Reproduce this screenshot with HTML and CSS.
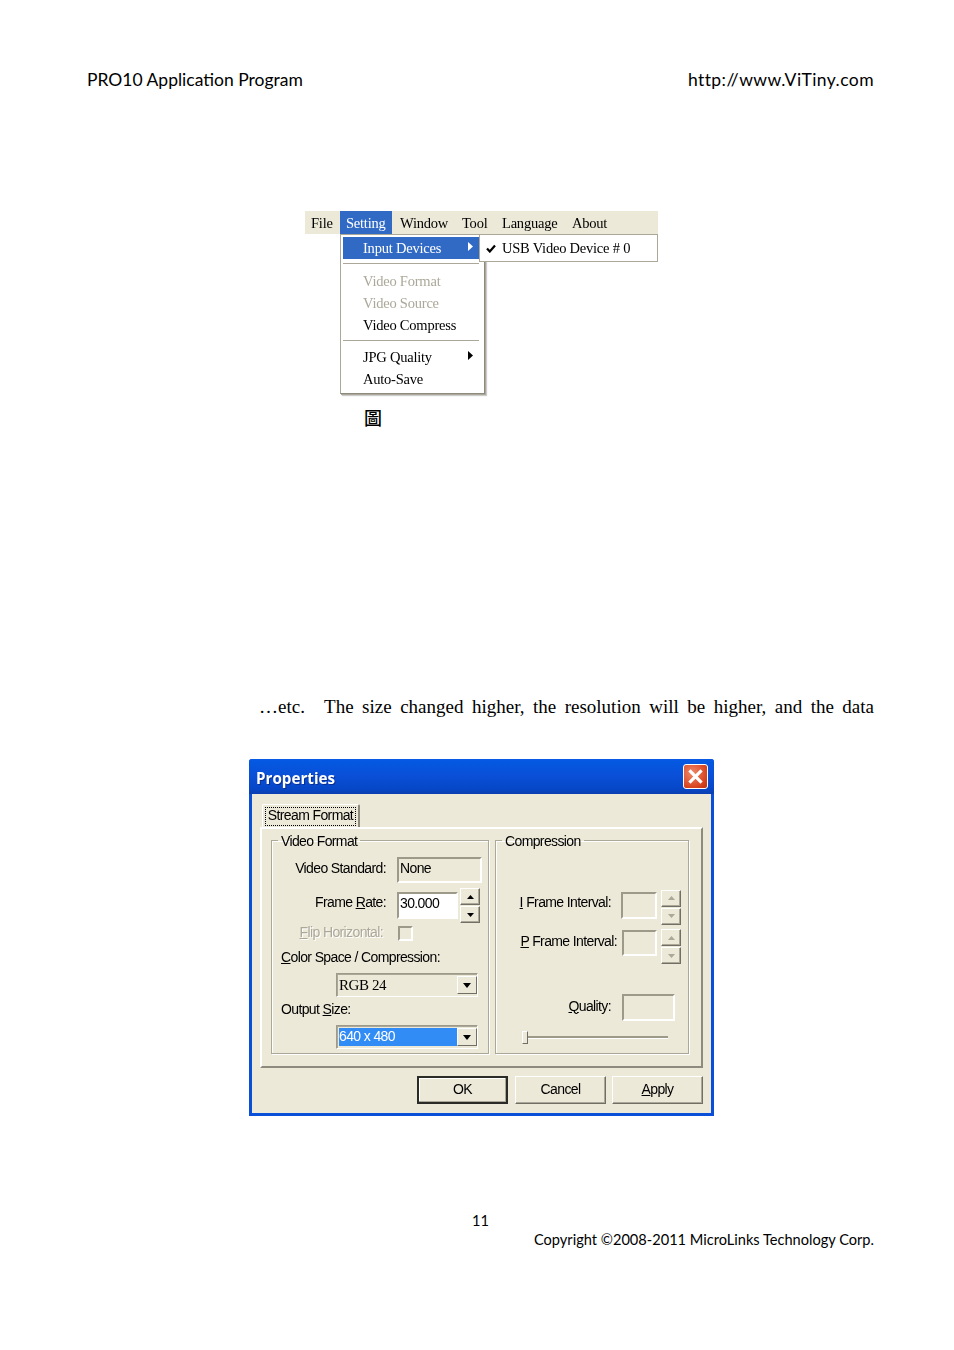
FILE: index.html
```html
<!DOCTYPE html>
<html lang="en">
<head>
<meta charset="utf-8">
<title>PRO10 Application Program</title>
<link rel="stylesheet" href="styles.css">
</head>
<body>
<main class="page">
  <header class="doc-head"><span>PRO10 Application Program</span><span class="doc-url">http://www.ViTiny.com</span></header>

  <section class="menu-shot">
    <nav class="menubar">
      <span class="mb-item mb-file">File</span>
      <span class="mb-item mb-active">Setting</span>
      <span class="mb-item mb-window">Window</span>
      <span class="mb-item mb-tool">Tool</span>
      <span class="mb-item mb-lang">Language</span>
      <span class="mb-item mb-about">About</span>
    </nav>
    <div class="dropdown">
      <div class="dd-row dd-selected">Input Devices<svg class="dd-arrow" viewBox="0 0 5 9"><path d="M0 0L5 4.5L0 9Z" fill="#fff"/></svg></div>
      <div class="dd-sep dd-sep-a"></div>
      <div class="dd-row dd-off">Video Format</div>
      <div class="dd-row dd-off">Video Source</div>
      <div class="dd-row">Video Compress</div>
      <div class="dd-sep dd-sep-b"></div>
      <div class="dd-row">JPG Quality<svg class="dd-arrow" viewBox="0 0 5 9"><path d="M0 0L5 4.5L0 9Z" fill="#000"/></svg></div>
      <div class="dd-row">Auto-Save</div>
    </div>
    <div class="submenu">
      <svg class="check" viewBox="0 0 10 9"><path d="M1 4.5L3.8 7.5L9 1.5" fill="none" stroke="#000" stroke-width="2.2"/></svg>
      <span>USB Video Device # 0</span>
    </div>
  </section>
  <p class="caption-glyph">圖</p>

  <p class="body-line"><span class="lead-gap">…etc.&nbsp;&nbsp;</span> The size changed higher, the resolution will be higher, and the data</p>

  <section class="dialog">
    <div class="titlebar">
      <span class="title">Properties</span>
      <span class="close"><svg viewBox="0 0 14 14"><path d="M2 2L12 12M12 2L2 12" stroke="#fff" stroke-width="2.6" fill="none"/></svg></span>
    </div>
    <div class="client">
      <div class="tab"><span class="tab-focus">Stream Format</span></div>
      <div class="panel">
        <fieldset class="group group-video">
          <legend>Video Format</legend>
          <div class="row r-standard">
            <span class="lbl lbl-a lbl-std">Video Standard:</span>
            <span class="box box-none">None</span>
          </div>
          <div class="row r-rate">
            <span class="lbl lbl-a lbl-rate">Frame <u>R</u>ate:</span>
            <span class="box box-white">30.000</span>
            <span class="spin">
              <span class="spin-btn"><svg viewBox="0 0 7 4"><path d="M3.5 0L7 4H0Z" fill="#000"/></svg></span>
              <span class="spin-btn"><svg viewBox="0 0 7 4"><path d="M0 0H7L3.5 4Z" fill="#000"/></svg></span>
            </span>
          </div>
          <div class="row r-flip">
            <span class="lbl lbl-flip disabled"><u>F</u>lip Horizontal:</span>
            <span class="checkbox"></span>
          </div>
          <div class="free-label fl-color"><u>C</u>olor Space / Compression:</div>
          <div class="combo combo-color"><span class="combo-val serif">RGB 24</span><span class="combo-btn"><svg viewBox="0 0 8 5"><path d="M0 0H8L4 5Z" fill="#000"/></svg></span></div>
          <div class="free-label fl-size">Output <u>S</u>ize:</div>
          <div class="combo combo-size"><span class="combo-val picked">640 x 480</span><span class="combo-btn"><svg viewBox="0 0 8 5"><path d="M0 0H8L4 5Z" fill="#000"/></svg></span></div>
        </fieldset>
        <fieldset class="group group-comp">
          <legend>Compression</legend>
          <div class="row r-i">
            <span class="lbl lbl-i"><u>I</u> Frame Interval:</span>
            <span class="box box-i"></span>
            <span class="spin spin-off">
              <span class="spin-btn"><svg viewBox="0 0 7 4"><path d="M3.5 0L7 4H0Z" fill="#aca899"/></svg></span>
              <span class="spin-btn"><svg viewBox="0 0 7 4"><path d="M0 0H7L3.5 4Z" fill="#aca899"/></svg></span>
            </span>
          </div>
          <div class="row r-p">
            <span class="lbl lbl-p"><u>P</u> Frame Interval:</span>
            <span class="box box-p"></span>
            <span class="spin spin-off">
              <span class="spin-btn"><svg viewBox="0 0 7 4"><path d="M3.5 0L7 4H0Z" fill="#aca899"/></svg></span>
              <span class="spin-btn"><svg viewBox="0 0 7 4"><path d="M0 0H7L3.5 4Z" fill="#aca899"/></svg></span>
            </span>
          </div>
          <div class="row r-q">
            <span class="lbl lbl-q"><u>Q</u>uality:</span>
            <span class="box box-q"></span>
          </div>
          <div class="slider"><span class="thumb"></span><span class="track"></span></div>
        </fieldset>
      </div>
      <div class="actions">
        <span class="btn btn-default">OK</span>
        <span class="btn btn-cancel">Cancel</span>
        <span class="btn"><u>A</u>pply</span>
      </div>
    </div>
  </section>

  <footer class="doc-foot">
    <div class="page-no">11</div>
    <div class="copy">Copyright ©2008-2011 MicroLinks Technology Corp.</div>
  </footer>
</main>
</body>
</html>
```
FILE: styles.css
```css
html, body { margin: 0; padding: 0; background: #fff; }
.page { width: 787px; margin-left: 87px; font-family: "Lato", "Liberation Sans", sans-serif; color: #000; }

.doc-head { display: flex; justify-content: space-between; padding-top: 70px; height: 20px; line-height: 20px; font-size: 17.5px; }
.doc-url { letter-spacing: .43px; }

/* menu screenshot */
.menu-shot { position: relative; width: 353px; height: 183px; margin: 121px 0 0 218px; font-family: "Liberation Serif", serif; font-size: 14.5px; letter-spacing: -.22px; filter: blur(.4px); }
.menubar { display: flex; height: 23px; line-height: 24px; background: #ece9d8; }
.mb-item { flex: none; white-space: nowrap; }
.mb-file { width: 35px; padding-left: 6px; box-sizing: border-box; }
.mb-active { width: 52px; padding-left: 6px; box-sizing: border-box; background: #316ac5; color: #fff; }
.mb-window { width: 70px; padding-left: 8px; box-sizing: border-box; }
.mb-tool { width: 40px; }
.mb-lang { width: 70px; }
.mb-about { width: 36px; }

.dropdown { box-sizing: border-box; width: 145px; height: 160px; margin-left: 35px; padding: 2px; background: #fff; border: 1px solid #aca899; border-right-color: #8e8b7e; border-bottom-color: #8e8b7e; box-shadow: 1px 1px 0 #aca899, 2px 2px 1px rgba(0,0,0,.2); }
.dd-row { position: relative; height: 22px; line-height: 22px; padding-left: 20px; width: 136px; box-sizing: border-box; white-space: nowrap; }
.dd-selected { background: #316ac5; color: #fff; }
.dd-off { color: #aca899; }
.dd-arrow { position: absolute; left: 125px; top: 5px; width: 5px; height: 9px; }
.dd-sep { height: 1px; background: #aca899; width: 136px; }
.dd-sep-a { margin: 4px 0 6px; }
.dd-sep-b { margin: 4px 0 5px; width: 136px; }

.submenu { position: absolute; left: 174px; top: 23px; box-sizing: border-box; width: 179px; height: 28px; display: flex; align-items: center; padding-left: 6px; gap: 6px; background: #fff; border: 1px solid #aca899; white-space: nowrap; }
.check { width: 10px; height: 9px; flex: none; }

.caption-glyph { margin: 13px 0 0 277px; height: 21px; line-height: 21px; font-family: "Noto Sans CJK TC", serif; font-size: 18px; font-weight: 500; }

.body-line { margin: 268px 0 0 172px; height: 21px; line-height: 21px; font-family: "Liberation Serif", serif; font-size: 19px; text-align: justify; text-align-last: justify; }
.lead-gap { margin-right: -6px; }

/* dialog */
.dialog { box-sizing: border-box; width: 465px; height: 357px; margin: 42px 0 0 162px; background: #0a4fd8; border-radius: 3px 3px 0 0; font-family: "Liberation Sans", sans-serif; font-size: 14px; letter-spacing: -.62px; filter: blur(.4px); overflow: hidden; }
.titlebar { height: 35px; display: flex; align-items: center; justify-content: space-between; padding: 0 6px 0 7px; background: linear-gradient(#0a5ae6 0, #0458e0 8%, #0a50d8 45%, #0647c8 85%, #0a3fb0 100%); }
.title { padding-top: 2px; color: #fff; font-family: "Open Sans", sans-serif; font-weight: 700; font-size: 15.2px; letter-spacing: 0; text-shadow: 1px 1px 0 #0a2f90; }
.close { display: flex; align-items: center; justify-content: center; width: 25px; height: 25px; box-sizing: border-box; border: 1px solid #fff; border-radius: 3px; background: radial-gradient(circle at 35% 35%, #ef8a6a, #d8431f 70%, #b9300f); }
.close svg { width: 17px; height: 17px; }
.client { box-sizing: border-box; height: 319px; margin: 0 3px; padding: 10px 8px 0; background: #ece9d8; }

.tab { box-sizing: border-box; width: 98px; height: 23px; margin-left: 2px; padding: 2px; background: #ece9d8; border: 1px solid #fff; border-right: 2px solid #8e8b7e; border-bottom: 0; border-radius: 2px 2px 0 0; }
.tab-focus { display: block; height: 19px; line-height: 14px; text-align: center; box-sizing: border-box; border: 1px dotted #000; white-space: nowrap; }

.panel { box-sizing: border-box; width: 443px; height: 241px; display: flex; gap: 6px; padding: 3px 12px 12px 9px; border: 2px solid; border-color: #fff #8e8b7e #8e8b7e #fff; }
.group { margin: 0; padding: 0; min-width: 0; box-sizing: border-box; border: 1px solid #aca899; box-shadow: 1px 1px 0 #fff, inset 1px 1px 0 #fff; }
.group legend { margin-left: 6px; padding: 0 3px; height: 16px; line-height: 18px; }
.group-video { width: 218px; }
.group-comp { width: 194px; }

.row { display: flex; align-items: center; }
.lbl { flex: none; text-align: right; white-space: nowrap; }
.disabled { color: #aca899; text-shadow: 1px 1px 0 #fff; }
.box { box-sizing: border-box; flex: none; display: block; border: 2px solid; border-color: #9d9a8a #fff #fff #9d9a8a; padding-left: 1px; }

.r-standard { height: 26px; margin-top: 9px; }
.lbl-a { width: 114px; }
.lbl-std { padding-bottom: 4px; }
.lbl-rate { padding-bottom: 8px; }
.box-none { width: 85px; height: 26px; margin-left: 11px; line-height: 19px; }
.r-rate { height: 35px; margin-top: 5px; }
.box-white { width: 61px; height: 27px; margin-left: 11px; line-height: 18px; background: #fff; }
.spin { flex: none; display: flex; flex-direction: column; gap: 1px; width: 20px; margin-left: 2px; }
.spin-btn { box-sizing: border-box; display: flex; align-items: center; justify-content: center; height: 17px; background: #ece9d8; border: 1px solid; border-color: #fff #716f64 #716f64 #fff; box-shadow: inset -1px -1px 0 #aca899; }
.spin-btn svg { width: 7px; height: 4px; }
.r-flip { height: 14px; margin-top: 3px; }
.lbl-flip { width: 111px; padding-bottom: 2px; }
.checkbox { box-sizing: border-box; flex: none; width: 15px; height: 15px; margin-left: 15px; border: 2px solid; border-color: #9d9a8a #fff #fff #9d9a8a; }
.free-label { height: 16px; line-height: 13px; padding-left: 9px; }
.fl-color { margin-top: 11px; }
.fl-size { margin-top: 6px; }
.combo { box-sizing: border-box; display: flex; align-items: stretch; width: 142px; height: 24px; margin: 6px 0 0 64px; padding: 2px 0 2px 2px; border: 1px solid; border-color: #9d9a8a #fff #fff #9d9a8a; box-shadow: inset 1px 1px 0 #aca899; }
.combo-val { flex: 1; padding-left: 0; line-height: 19px; white-space: nowrap; }
.serif { font-family: "Liberation Serif", serif; font-size: 15px; letter-spacing: -.4px; }
.picked { background: #318cf5; color: #fff; line-height: 17px; }
.combo-btn { box-sizing: border-box; flex: none; width: 20px; display: flex; align-items: center; justify-content: center; background: #ece9d8; border: 1px solid; border-color: #fff #716f64 #716f64 #fff; }
.combo-btn svg { width: 8px; height: 5px; }

.r-i { height: 36px; margin-top: 41px; }
.lbl-i { width: 115px; padding-bottom: 10px; }
.box-i { width: 36px; height: 27px; margin-left: 10px; align-self: flex-start; margin-top: 3px; }
.r-i .spin, .r-p .spin { margin-left: 4px; }
.r-p { height: 35px; margin-top: 4px; }
.lbl-p { width: 121px; padding-bottom: 12px; }
.box-p { width: 35px; height: 26px; margin-left: 5px; align-self: flex-start; margin-top: 1px; }
.r-q { height: 27px; margin-top: 30px; }
.lbl-q { width: 115px; padding-bottom: 4px; }
.box-q { width: 53px; height: 27px; margin-left: 11px; }
.slider { display: flex; align-items: center; height: 13px; width: 146px; margin: 10px 0 0 26px; }
.thumb { flex: none; width: 6px; height: 13px; box-sizing: border-box; background: #ece9d8; border: 1px solid; border-color: #fff #716f64 #716f64 #fff; }
.track { flex: 1; height: 3px; box-sizing: border-box; border-top: 2px solid #9d9a8a; border-bottom: 1px solid #fff; }

.actions { display: flex; justify-content: flex-end; gap: 7px; margin-top: 8px; padding-right: 0; }
.btn { box-sizing: border-box; width: 91px; height: 28px; line-height: 24px; text-align: center; background: #ece9d8; border: 1px solid; border-color: #fff #716f64 #716f64 #fff; box-shadow: inset -1px -1px 0 #aca899; }
.btn-cancel { margin-right: -1px; }
.btn-default { border: 2px solid #2b2b28; line-height: 22px; box-shadow: inset -1px -1px 0 #aca899, inset 1px 1px 0 #fff; }

.doc-foot { margin-top: 95px; font-size: 14.6px; line-height: 19px; }
.page-no { text-align: center; }
.copy { text-align: right; }
```
